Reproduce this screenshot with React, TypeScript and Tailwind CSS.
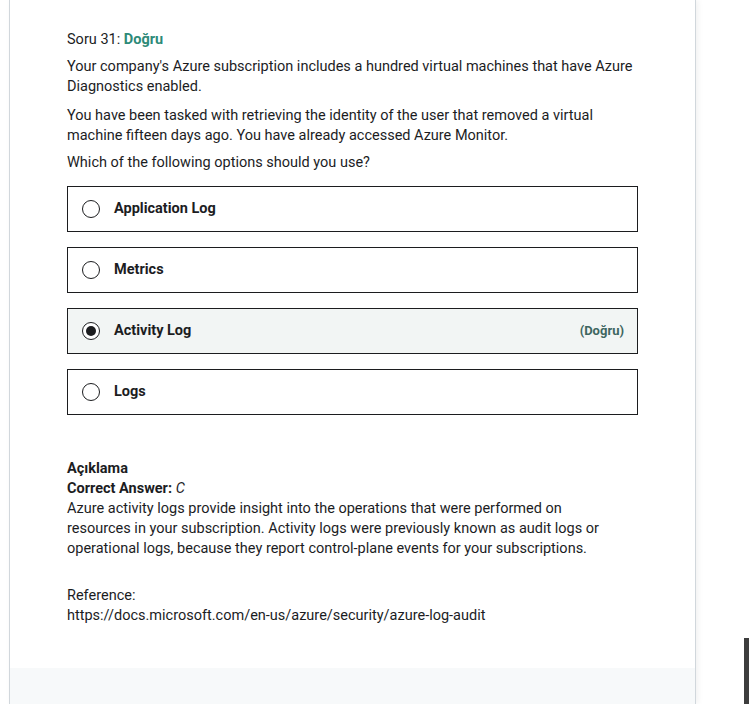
import React from "react";

const options = [
  { label: "Application Log", selected: false, correct: false },
  { label: "Metrics", selected: false, correct: false },
  { label: "Activity Log", selected: true, correct: true },
  { label: "Logs", selected: false, correct: false },
];

function Radio({ checked }: { checked: boolean }) {
  return (
    <span className="flex h-[18px] w-[18px] shrink-0 items-center justify-center rounded-full border border-[#1c1d1f] bg-white">
      {checked && <span className="h-[10px] w-[10px] rounded-full bg-[#1c1d1f]" />}
    </span>
  );
}

export default function App() {
  return (
    <div className="relative flex min-h-[704px] bg-white font-['Roboto',sans-serif] text-[14.5px] text-[#1c1d1f]">
      <div className="ml-[9px] flex w-[687px] flex-col border-x border-[#d1d7dc] shadow-[2px_0_6px_rgba(0,0,0,0.06)]">
        {/* Question */}
        <div className="flex-1 pl-[57px] pr-[57px] pt-[30px]">
          <div className="leading-[20px]">
            Soru 31: <span className="font-bold text-[#2d8a78]">Doğru</span>
          </div>
          <p className="mt-[7px] leading-[20px]">
            Your company's Azure subscription includes a hundred virtual machines that have Azure Diagnostics enabled.
          </p>
          <p className="mt-[9px] leading-[20px]">
            You have been tasked with retrieving the identity of the user that removed a virtual machine fifteen days ago. You have already accessed Azure Monitor.
          </p>
          <p className="mt-[7px] leading-[20px]">Which of the following options should you use?</p>

          <div className="mt-[13px] flex w-[571px] flex-col gap-[15px]">
            {options.map((o) => (
              <div
                key={o.label}
                className={`flex h-[46px] items-center border border-[#1c1d1f] pl-[14px] pr-[13px] ${
                  o.correct ? "bg-[#f2f5f4]" : "bg-white"
                }`}
              >
                <Radio checked={o.selected} />
                <span className="ml-[14px] font-bold">{o.label}</span>
                {o.correct && (
                  <span className="ml-auto text-[13px] font-bold text-[#3e6660]">(Doğru)</span>
                )}
              </div>
            ))}
          </div>

          {/* Explanation */}
          <div className="mt-[44px] pb-[42px] leading-[20px]">
            <div className="font-bold">Açıklama</div>
            <div>
              <span className="font-bold">Correct Answer: </span>
              <span className="italic">C</span>
            </div>
            <p className="w-[540px]">
              Azure activity logs provide insight into the operations that were performed on resources in your subscription. Activity logs were previously known as audit logs or operational logs, because they report control-plane events for your subscriptions.
            </p>
            <p className="mt-[27px]">Reference:</p>
            <p>https://docs.microsoft.com/en-us/azure/security/azure-log-audit</p>
          </div>
        </div>
        <div className="h-[36px] bg-[#f7f9fa]" />
      </div>
      <div className="absolute left-[744px] top-[638px] h-[66px] w-[5px] bg-[#3d3d3d]" />
    </div>
  );
}
